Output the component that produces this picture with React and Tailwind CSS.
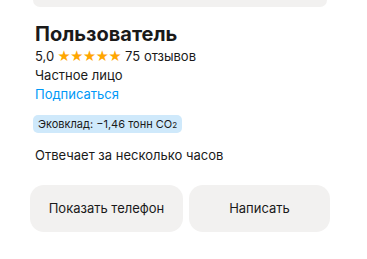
export default function App() {
  return (
    <div className="w-[367px] h-[259px] bg-white overflow-hidden font-['Inter',sans-serif] text-[#1a1a1a]">
      <div className="ml-[33px] w-[294px] h-[7px] bg-[#f2f1f0] rounded-b-[12px]" />
      <div className="pl-[35px] pt-[15px]">
        <h1 className="text-[20px] leading-[24px] font-bold">Пользователь</h1>
        <div className="mt-[1px] flex items-center text-[13px] leading-[19px]">
          <span>5,0</span>
          <span className="ml-[3px] flex text-[#ffa600] text-[13px] tracking-[-0.8px]">★★★★★</span>
          <span className="ml-[4px]">75 отзывов</span>
        </div>
        <div className="text-[13px] leading-[19px]">Частное лицо</div>
        <div className="text-[13px] leading-[19px] text-[#0099f7]">Подписаться</div>
        <div className="mt-[11px] -ml-[2px] inline-flex h-[18px] items-center rounded-[5px] bg-[#cfe9fb] px-[5px] text-[11px]">
          Эковклад: −1,46 тонн CO<span className="text-[8px] translate-y-[1px]">2</span>
        </div>
        <div className="mt-[12px] text-[13px] leading-[19px]">Отвечает за несколько часов</div>
      </div>
      <div className="mt-[20px] ml-[30px] flex gap-[6px]">
        <button className="w-[153px] h-[47px] rounded-[14px] bg-[#f2f1f0] text-[13px]">Показать телефон</button>
        <button className="w-[141px] h-[47px] rounded-[14px] bg-[#f2f1f0] text-[13px]">Написать</button>
      </div>
    </div>
  );
}
